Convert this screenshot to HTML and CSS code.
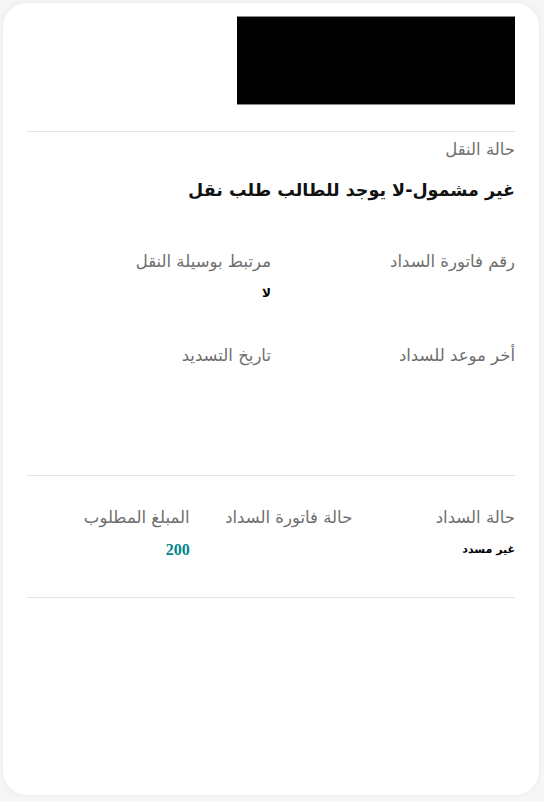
FILE: index.html
```html
<!DOCTYPE html>
<html lang="ar" dir="rtl">
<head>
<meta charset="utf-8">
<link rel="stylesheet" href="styles.css">
</head>
<body>
<div class="card">
  <div class="logo-row"><div class="logo"></div></div>
  <div class="divider"></div>
  <div class="section">
    <div class="label">حالة النقل</div>
    <div class="title">غير مشمول-لا يوجد للطالب طلب نقل</div>
  </div>
  <div class="grid2">
    <div class="cell">
      <div class="label">رقم فاتورة السداد</div>
      <div class="value"></div>
    </div>
    <div class="cell">
      <div class="label">مرتبط بوسيلة النقل</div>
      <div class="value">لا</div>
    </div>
    <div class="cell">
      <div class="label">أخر موعد للسداد</div>
      <div class="value"></div>
    </div>
    <div class="cell">
      <div class="label">تاريخ التسديد</div>
      <div class="value"></div>
    </div>
  </div>
  <div class="divider"></div>
  <div class="grid3">
    <div class="cell">
      <div class="label">حالة السداد</div>
      <div class="value small">غير مسدد</div>
    </div>
    <div class="cell">
      <div class="label">حالة فاتورة السداد</div>
      <div class="value"></div>
    </div>
    <div class="cell">
      <div class="label">المبلغ المطلوب</div>
      <div class="value amount">200</div>
    </div>
  </div>
  <div class="divider"></div>
</div>
</body>
</html>
```
FILE: styles.css
```css
html, body {
  margin: 0;
  padding: 0;
  background: #f6f6f6;
}
body {
  padding: 3px 5px 7px 3px;
  font-family: "DejaVu Sans", sans-serif;
}
.card {
  box-sizing: border-box;
  height: 792px;
  background: #ffffff;
  border-radius: 24px;
  box-shadow: 0 0 6px rgba(0,0,0,0.06);
  padding: 13px 24px 0 24px;
}
.logo-row {
  display: flex;
  justify-content: flex-start;
}
.logo {
  width: 278px;
  height: 87px;
  background: #000;
  border-top: 1px solid #888;
  border-bottom: 1px solid #888;
}
.divider {
  height: 1px;
  background: #e3e3e3;
}
.logo-row + .divider {
  margin-top: 26px;
}
.section {
  padding-top: 7px;
}
.label {
  color: #6e6e6e;
  font-size: 16.5px;
  line-height: 22px;
}
.title {
  font-weight: bold;
  font-size: 17.5px;
  line-height: 26px;
  color: #111;
  margin-top: 16px;
}
.grid2 {
  display: grid;
  grid-template-columns: 1fr 1fr;
  row-gap: 44px;
  margin-top: 48px;
  padding-bottom: 80px;
}
.grid3 {
  display: grid;
  grid-template-columns: 1fr 1fr 1fr;
  margin-top: 31px;
  padding-bottom: 39px;
}
.value {
  font-weight: bold;
  font-size: 12px;
  line-height: 16px;
  color: #000;
  margin-top: 12px;
  min-height: 16px;
}
.value.small {
  font-size: 11px;
  margin-top: 13px;
}
.amount {
  color: #00868a;
  font-family: "Liberation Serif", serif;
  font-size: 16px;
  margin-top: 13px;
}
```
